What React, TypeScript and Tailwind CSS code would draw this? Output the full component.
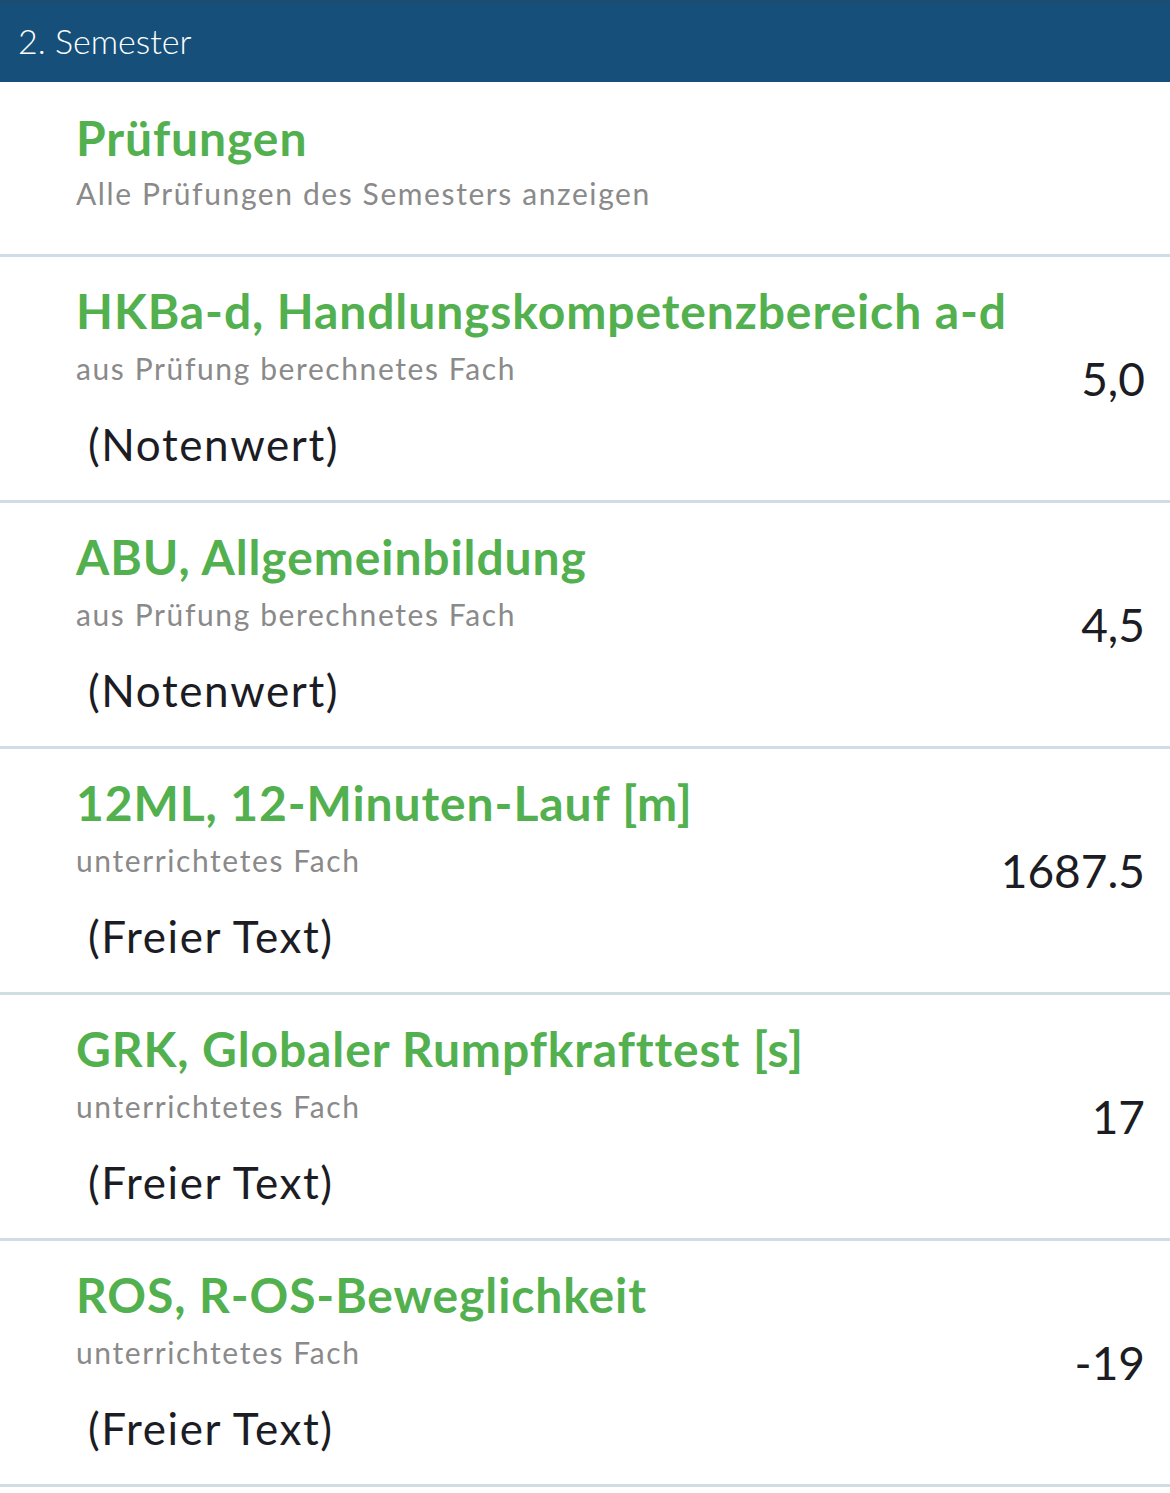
import React from 'react'

type Fach = {
  title: string;
  kind: string;
  type: string;
  value: string;
}

const faecher: Fach[] = [
  { title: 'HKBa-d, Handlungskompetenzbereich a-d', kind: 'aus Prüfung berechnetes Fach', type: '(Notenwert)', value: '5,0' },
  { title: 'ABU, Allgemeinbildung', kind: 'aus Prüfung berechnetes Fach', type: '(Notenwert)', value: '4,5' },
  { title: '12ML, 12-Minuten-Lauf [m]', kind: 'unterrichtetes Fach', type: '(Freier Text)', value: '1687.5' },
  { title: 'GRK, Globaler Rumpfkrafttest [s]', kind: 'unterrichtetes Fach', type: '(Freier Text)', value: '17' },
  { title: 'ROS, R-OS-Beweglichkeit', kind: 'unterrichtetes Fach', type: '(Freier Text)', value: '-19' },
]

function FachRow({ fach }: { fach: Fach }) {
  return (
    <div className="flex items-center justify-between h-[246px] border-b-[3px] border-[#d0dde4] pl-[76px] pr-[25px]">
      <div className="flex flex-col self-start pt-[30px]">
        <span className="text-[48px] leading-[48px] font-bold text-[#52b04f] tracking-[0.9px]">{fach.title}</span>
        <span className="mt-[18px] text-[30px] leading-[30px] text-[#8a8a8a] tracking-[1.6px]">{fach.kind}</span>
        <span className="mt-[39px] pl-[12px] text-[44px] leading-[44px] text-[#1c1c24] tracking-[1.6px]">{fach.type}</span>
      </div>
      <span className="text-[46px] leading-[46px] text-[#1c1c24]">{fach.value}</span>
    </div>
  )
}

export default function App() {
  return (
    <div className="w-[1170px] min-h-[1493px] bg-white" style={{ fontFamily: 'Lato, "Noto Sans", sans-serif' }}>
      <div className="h-[82px] bg-[#16507a] border-t-4 border-[#1a4d72] flex items-center pl-[18px] pb-[5px]">
        <span className="text-[34px] font-light text-white">2. Semester</span>
      </div>
      <div className="h-[175px] border-b-[3px] border-[#d0dde4] pl-[76px] pt-[32px]">
        <div className="text-[48px] leading-[48px] font-bold text-[#52b04f] tracking-[0.9px]">Prüfungen</div>
        <div className="mt-[16px] text-[30px] leading-[30px] text-[#8a8a8a] tracking-[1.6px]">Alle Prüfungen des Semesters anzeigen</div>
      </div>
      {faecher.map((fach) => (
        <FachRow key={fach.title} fach={fach} />
      ))}
    </div>
  )
}
